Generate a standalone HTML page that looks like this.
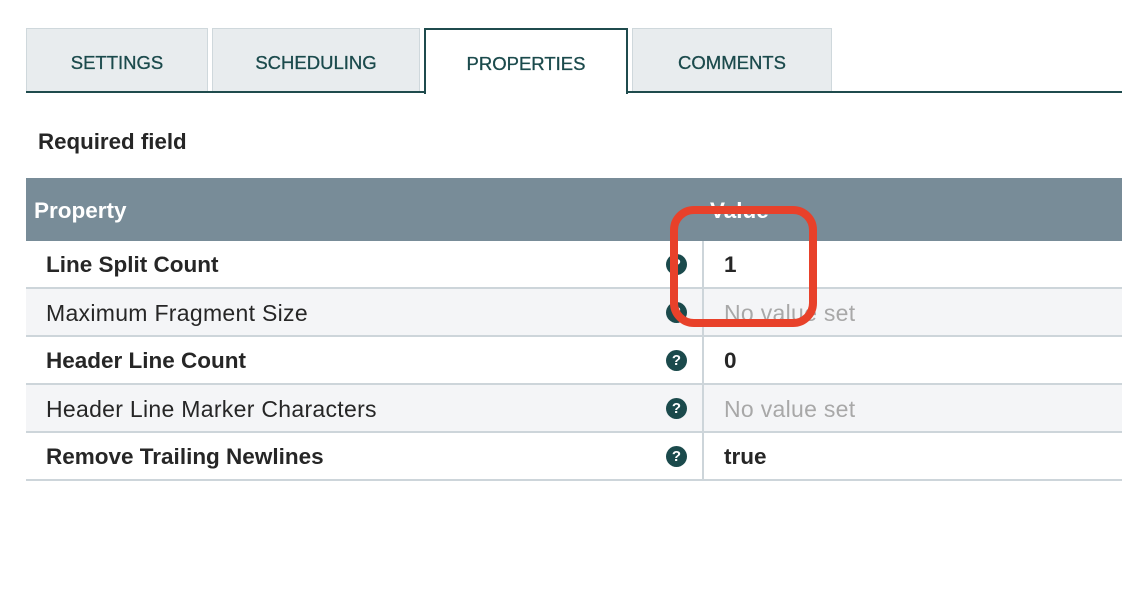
<!DOCTYPE html>
<html><head><style>
body{margin:0;width:1122px;height:592px;background:#fff;font-family:"Liberation Sans",sans-serif;position:relative;overflow:hidden}
.tab{position:absolute;top:28px;height:64px;background:#e8ecee;border:1px solid #cfd8dc;border-bottom:none;box-sizing:border-box;color:#1b4a4c;font-size:18.5px;text-align:center;line-height:68px;-webkit-text-stroke:0.3px #1b4a4c}
.line{position:absolute;top:91px;left:26px;width:1096px;height:2px;background:#1f4b4d}
.act{background:#fff;border:2px solid #1f4b4d;border-bottom:none;height:66px;z-index:2}
.hdr{position:absolute;left:26px;top:178px;width:1096px;height:63px;background:#788c98;color:#fff;font-weight:bold;font-size:22.5px}
.row{position:absolute;left:26px;width:1096px;height:48px;border-bottom:2px solid #cdd5da;box-sizing:border-box;font-size:22.5px;color:#262626}
.row .n{position:absolute;left:20px;top:11px}
.row .n:not(.b){font-size:23px;letter-spacing:0.3px}
.row .v{position:absolute;left:698px;top:11px}
.row .v.g{font-size:23px;letter-spacing:0.3px}
.row .d{position:absolute;left:676px;top:0;width:2px;height:48px;background:#cdd5da}
.q{position:absolute;left:640px;top:13px;width:21px;height:21px;border-radius:50%;background:#1b4a4c;color:#fff;font-size:15px;font-weight:bold;text-align:center;line-height:21px;letter-spacing:0}
.g{color:#a8a8a8}
.b{font-weight:bold}
.alt{background:#f4f5f7}
</style></head><body>
<div class="tab" style="left:26px;width:182px">SETTINGS</div>
<div class="tab" style="left:212px;width:208px">SCHEDULING</div>
<div class="tab act" style="left:424px;width:204px">PROPERTIES</div>
<div class="tab" style="left:632px;width:200px">COMMENTS</div>
<div class="line"></div>
<div style="position:absolute;left:38px;top:129px;font-size:22.3px;font-weight:bold;color:#262626">Required field</div>
<div class="hdr"><span style="position:absolute;left:8px;top:20px">Property</span><span style="position:absolute;left:684px;top:20px">Value</span></div>
<div class="row" style="top:241px"><span class="n b">Line Split Count</span><span class="q">?</span><span class="d"></span><span class="v b">1</span></div>
<div class="row alt" style="top:289px"><span class="n">Maximum Fragment Size</span><span class="q">?</span><span class="d"></span><span class="v g">No value set</span></div>
<div class="row" style="top:337px"><span class="n b">Header Line Count</span><span class="q">?</span><span class="d"></span><span class="v b">0</span></div>
<div class="row alt" style="top:385px"><span class="n">Header Line Marker Characters</span><span class="q">?</span><span class="d"></span><span class="v g">No value set</span></div>
<div class="row" style="top:433px"><span class="n b">Remove Trailing Newlines</span><span class="q">?</span><span class="d"></span><span class="v b">true</span></div>
<div style="position:absolute;left:670px;top:206px;width:147px;height:121px;border:8px solid #e8412a;border-radius:24px;box-sizing:border-box;z-index:5"></div>
</body></html>
